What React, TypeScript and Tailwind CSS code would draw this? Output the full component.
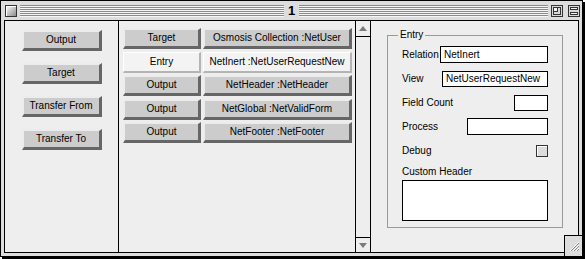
import clsx from "clsx";

function Bevel({ children, light, className }: { children: React.ReactNode; light?: boolean; className?: string }) {
  return (
    <div
      className={clsx(
        "flex items-center justify-center leading-none whitespace-nowrap",
        light
          ? "bg-[#f3f3f3] border-t border-l border-t-white border-l-white border-b-2 border-r-2 border-b-[#b4b4b4] border-r-[#b4b4b4]"
          : "bg-[#cccccc] border-t-2 border-l-2 border-t-[#ececec] border-l-[#ececec] border-b-[3px] border-r-[3px] border-b-[#666666] border-r-[#666666]",
        className
      )}
    >
      {children}
    </div>
  );
}

const rows = [
  { kind: "Target", ref: "Osmosis Collection :NetUser" },
  { kind: "Entry", ref: "NetInert :NetUserRequestNew", light: true },
  { kind: "Output", ref: "NetHeader :NetHeader" },
  { kind: "Output", ref: "NetGlobal :NetValidForm" },
  { kind: "Output", ref: "NetFooter :NetFooter" },
];

const stripes =
  "bg-[repeating-linear-gradient(to_bottom,#8a8a8a_0px,#8a8a8a_1px,#f6f6f6_1px,#f6f6f6_2px)]";

function Field({ label, w, h = 17, value }: { label: string; w: number; h?: number; value?: string }) {
  return (
    <div className="flex h-[17px] items-center justify-between">
      <span>{label}</span>
      <div
        className="flex items-center border border-black bg-white pl-[3px] leading-none"
        style={{ width: w, height: h }}
      >
        {value}
      </div>
    </div>
  );
}

export default function App() {
  return (
    <div className="h-[259px] w-[585px] bg-white font-['Liberation_Sans',Arial,sans-serif] text-[10px] text-black">
      <div className="flex h-[257px] w-[583px] flex-col border border-black bg-[#dddddd] shadow-[2px_2px_0_#000]">
        {/* title bar */}
        <div className="flex h-[19px] items-center pl-[4px] pr-[2px]">
          <div className="h-[12px] w-[12px] border border-[#333] bg-gradient-to-br from-white to-[#8c8c8c] shadow-[inset_1px_1px_0_#fff]" />
          <div className={clsx("ml-[3px] h-[12px] w-[264px]", stripes)} />
          <div className="w-[15px] text-center text-[13px] font-bold leading-none">1</div>
          <div className={clsx("h-[12px] flex-1", stripes)} />
          <div className="ml-[3px] flex gap-[5px]">
            <svg width="12" height="12" viewBox="0 0 12 12">
              <rect x="0.5" y="0.5" width="11" height="11" fill="#d8d8d8" stroke="#333" />
              <rect x="2.5" y="2.5" width="7" height="7" fill="none" stroke="#333" />
              <rect x="2.5" y="2.5" width="4" height="4" fill="#f4f4f4" stroke="#333" />
            </svg>
            <svg width="12" height="12" viewBox="0 0 12 12">
              <rect x="0.5" y="0.5" width="11" height="11" fill="#d8d8d8" stroke="#333" />
              <rect x="2.5" y="2.5" width="7" height="2" fill="#f4f4f4" stroke="#333" />
              <rect x="2.5" y="7.5" width="7" height="2" fill="#f4f4f4" stroke="#333" />
            </svg>
          </div>
        </div>

        {/* content */}
        <div className="relative mx-[3px] flex h-[233px] border border-black bg-[#eeeeee]">
          {/* left column */}
          <div className="flex w-[114px] flex-col items-center gap-[12px] border-r border-black pt-[9px]">
            {["Output", "Target", "Transfer From", "Transfer To"].map((t) => (
              <Bevel key={t} className="h-[21px] w-[80px]">
                {t}
              </Bevel>
            ))}
          </div>

          {/* middle list */}
          <div className="flex w-[236px] flex-col gap-[2.5px] pl-[4px] pt-[7px]">
            {rows.map((r, i) => (
              <div key={i} className="flex h-[21px] gap-[2px]">
                <Bevel light={r.light} className="w-[78px]">
                  {r.kind}
                </Bevel>
                <Bevel light={r.light} className="w-[149px]">
                  {r.ref}
                </Bevel>
              </div>
            ))}
          </div>

          {/* scrollbar */}
          <div className="flex w-[16px] flex-col border-x border-black">
            <div className="flex h-[16px] items-center justify-center border-b border-black">
              <svg width="8" height="5" viewBox="0 0 8 5">
                <polygon points="4,0 8,5 0,5" fill="#7a7a7a" />
              </svg>
            </div>
            <div className="flex-1" />
            <div className="flex h-[15px] items-center justify-center border-t border-black">
              <svg width="8" height="5" viewBox="0 0 8 5">
                <polygon points="0,0 8,0 4,5" fill="#7a7a7a" />
              </svg>
            </div>
          </div>

          {/* right panel */}
          <div className="flex-1 pl-[16px] pt-[8px]">
            <fieldset className="h-[199px] w-[176px] border border-[#9a9a9a] px-[14px]">
              <legend className="ml-[-4px] px-[2px] leading-[12px]">Entry</legend>
              <div className="flex flex-col gap-[7px] pt-[5px]">
                <Field label="Relation" w={108} value="NetInert" />
                <Field label="View" w={106} h={16} value="NetUserRequestNew" />
                <Field label="Field Count" w={34} h={16} />
                <Field label="Process" w={81} />
                <div className="flex h-[17px] items-center justify-between">
                  <span>Debug</span>
                  <div className="h-[12px] w-[12px] border border-[#333] bg-[#dcdcdc] shadow-[inset_1px_1px_0_#fff]" />
                </div>
              </div>
              <div className="mt-[7px] leading-[12px]">Custom Header</div>
              <div className="mt-[2px] h-[41px] w-[146px] border border-black bg-white" />
            </fieldset>
          </div>

          {/* grow box */}
          <div className="absolute bottom-[-4px] right-[-4px] flex h-[21px] w-[18px] items-center justify-center border-l border-t border-black bg-[#dddddd]">
            <svg width="12" height="12" viewBox="0 0 12 12">
              <path d="M2 11 L11 2" stroke="#fff" />
              <path d="M3 11 L11 3" stroke="#888" />
              <path d="M5 11 L11 5" stroke="#fff" />
              <path d="M6 11 L11 6" stroke="#888" />
              <path d="M8 11 L11 8" stroke="#fff" />
              <path d="M9 11 L11 9" stroke="#888" />
            </svg>
          </div>
        </div>
      </div>
    </div>
  );
}
